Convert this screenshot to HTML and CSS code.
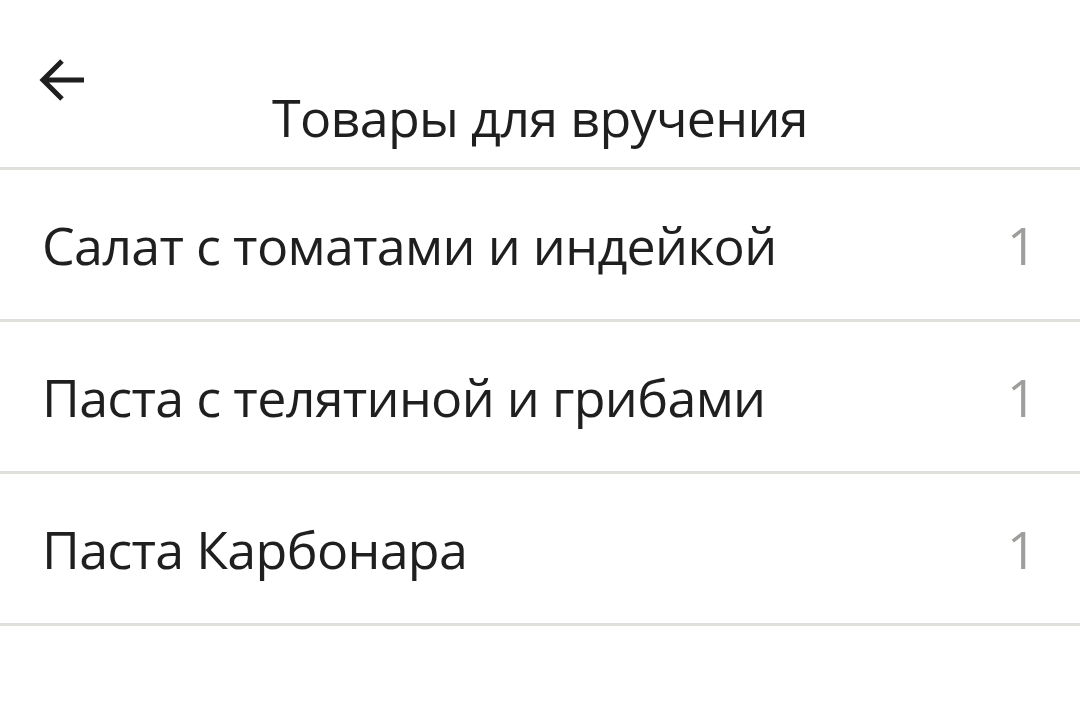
FILE: index.html
```html
<!DOCTYPE html>
<html lang="ru">
<head>
    <meta charset="UTF-8">
    <meta name="viewport" content="width=device-width, initial-scale=1.0">
    <title>Товары для вручения</title>
    <link rel="stylesheet" href="styles.css">
</head>
<body>
    <div class="header">
        <button class="back" aria-label="Назад">
            <svg width="50" height="48" viewBox="0 0 50 48">
                <path d="M47 23H6 M25 4 6 23 25 42" fill="none" stroke="#1f1f1f" stroke-width="5"/>
            </svg>
        </button>
        <h1>Товары для вручения</h1>
    </div>
    <ul class="items">
        <li><span class="name">Салат с томатами и индейкой</span><span class="count">1</span></li>
        <li><span class="name">Паста с телятиной и грибами</span><span class="count">1</span></li>
        <li><span class="name">Паста Карбонара</span><span class="count">1</span></li>
    </ul>
</body>
</html>
```

FILE: styles.css
```css
body {
    font-family: 'Open Sans', sans-serif;
    margin: 0;
    padding: 0;
    background-color: #ffffff;
    color: #1f1f1f;
}
.header {
    position: relative;
    height: 167px;
    border-bottom: 3px solid #e0dfdb;
    display: flex;
    justify-content: center;
}
.back {
    position: absolute;
    left: 37px;
    top: 57px;
    padding: 0;
    border: none;
    background: none;
}
.header h1 {
    margin: 87px 0 0;
    font-size: 52px;
    font-weight: normal;
    line-height: 60px;
    letter-spacing: -0.7px;
}
.items {
    list-style: none;
    margin: 0;
    padding: 0;
}
.items li {
    display: flex;
    justify-content: space-between;
    align-items: center;
    height: 149px;
    padding: 0 44px 0 42px;
    border-bottom: 3px solid #e0dfdb;
    font-size: 52px;
    letter-spacing: -0.7px;
}
.count {
    color: #a09e9a;
}
```
